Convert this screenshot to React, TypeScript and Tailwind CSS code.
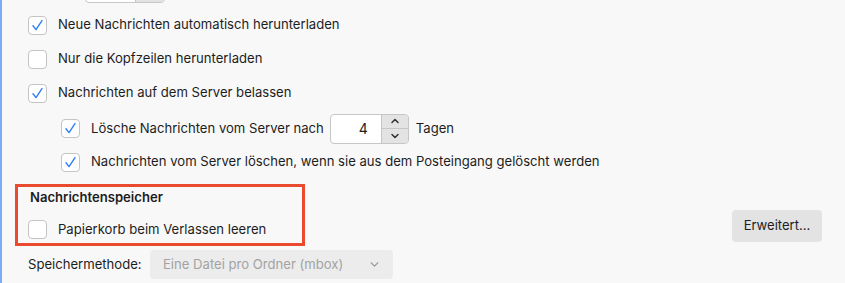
import { ChevronDown, ChevronUp } from "lucide-react";

function Box({ checked }: { checked?: boolean }) {
  return (
    <div className="w-[19px] h-[19px] shrink-0 rounded-[4px] border border-[#c4c4c4] bg-white flex items-center justify-center">
      {checked ? (
        <svg width="15" height="15" viewBox="0 0 15 15" fill="none">
          <path
            d="M3 7.8 L6 11.6 L12 2.6"
            stroke="#2f7df6"
            strokeWidth="1.4"
            strokeLinecap="round"
            strokeLinejoin="round"
          />
        </svg>
      ) : null}
    </div>
  );
}

function Row({
  checked,
  label,
  className,
  children,
}: {
  checked?: boolean;
  label: string;
  className: string;
  children?: React.ReactNode;
}) {
  return (
    <div className={`flex items-center ${className}`}>
      <Box checked={checked} />
      <span className="ml-[11px] whitespace-nowrap">{label}</span>
      {children}
    </div>
  );
}

export default function App() {
  return (
    <div
      className="w-[845px] h-[283px] overflow-hidden flex bg-[#f8f8f8] text-[13.1px] text-[#1d1d1d]"
      style={{ fontFamily: "Inter, 'Noto Sans', sans-serif" }}
    >
      <div className="w-[2px] shrink-0 bg-[#7eabf6]" />

      <div className="flex-1 flex flex-col pl-[13px] pr-[23px]">
        {/* bottom of the field above */}
        <div className="-mt-[27px] ml-[70px] w-[80px] h-[30px] rounded-[4px] border border-[#c8c8c8] bg-white flex justify-end overflow-hidden">
          <div className="w-[29px] bg-[#e2e2e2] border-l border-[#c8c8c8]" />
        </div>

        <div className="flex flex-col pl-[13px] mt-[5px]">
          <Row checked label="Neue Nachrichten automatisch herunterladen" className="h-[34px]" />
          <Row label="Nur die Kopfzeilen herunterladen" className="h-[34px]" />
          <Row checked label="Nachrichten auf dem Server belassen" className="h-[34px]" />

          <div className="pl-[33px] flex flex-col">
            <Row checked label="Lösche Nachrichten vom Server nach" className="h-[37px]">
              <div className="ml-[6px] w-[79px] h-[30px] rounded-[4px] border border-[#c6c6c6] bg-white flex overflow-hidden">
                <div className="flex-1 flex items-center justify-end pr-[13px] text-[14px]">4</div>
                <div className="w-[27px] bg-[#e3e3e3] border-l border-[#c6c6c6] flex flex-col">
                  <div className="flex-1 flex items-center justify-center border-b border-[#c6c6c6]">
                    <ChevronUp size={12} strokeWidth={3} color="#333" />
                  </div>
                  <div className="flex-1 flex items-center justify-center">
                    <ChevronDown size={12} strokeWidth={3} color="#333" />
                  </div>
                </div>
              </div>
              <span className="ml-[7px]">Tagen</span>
            </Row>
            <Row
              checked
              label="Nachrichten vom Server löschen, wenn sie aus dem Posteingang gelöscht werden"
              className="h-[30px]"
            />
          </div>
        </div>

        <div className="mt-[7px] flex items-end justify-between">
          <div className="w-[290px] h-[62px] border-[3px] border-[#ea4a2e] flex flex-col">
            <div className="h-[22px] pl-[12px] flex items-center font-semibold">
              Nachrichtenspeicher
            </div>
            <div className="flex items-center pl-[10px] pt-[11px]">
              <Box />
              <span className="ml-[11px]">Papierkorb beim Verlassen leeren</span>
            </div>
          </div>
          <div className="mb-[4px] w-[90px] h-[32px] rounded-[4px] bg-[#e3e3e3] flex items-center justify-center">
            Erweitert…
          </div>
        </div>

        <div className="mt-[4px] pl-[13px] flex items-center h-[29px]">
          <span className="w-[122px]">Speichermethode:</span>
          <div className="w-[243px] h-[29px] rounded-[4px] bg-[#ececec] flex items-center justify-between pl-[13px] pr-[12px] text-[#a3a3a3]">
            <span>Eine Datei pro Ordner (mbox)</span>
            <ChevronDown size={13} strokeWidth={2.5} color="#9a9a9a" />
          </div>
        </div>
      </div>
    </div>
  );
}
